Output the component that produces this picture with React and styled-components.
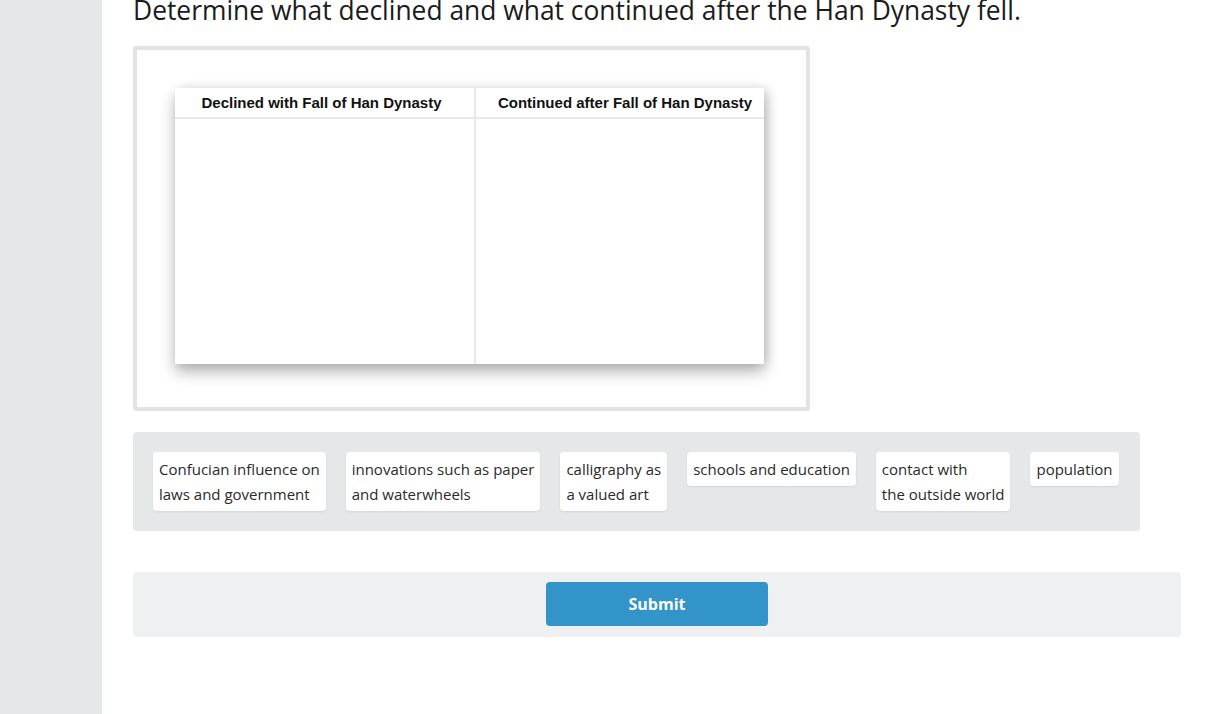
import React from 'react';
import styled, { createGlobalStyle } from 'styled-components';

const GlobalStyle = createGlobalStyle`
  html, body {
    margin: 0;
    padding: 0;
    background: #ffffff;
    overflow: hidden;
  }
  body {
    font-family: "Open Sans", "Liberation Sans", sans-serif;
    color: #222;
  }
`;

const Page = styled.div`
  display: flex;
  height: 714px;
  width: 1210px;
`;

const Sidebar = styled.div`
  width: 102px;
  flex-shrink: 0;
  background: #e5e8e8;
`;

const Main = styled.div`
  flex: 1;
  padding-left: 31px;
  display: flex;
  flex-direction: column;
  align-items: flex-start;
`;

const Title = styled.h1`
  margin: -5px 0 21px;
  font-size: 26.4px;
  line-height: 30px;
  font-weight: 400;
  color: #1b1b1b;
  white-space: nowrap;
`;

const Frame = styled.div`
  box-sizing: border-box;
  width: 677px;
  height: 365px;
  border: 4px solid #e3e3e3;
  border-radius: 3px;
  padding: 38px;
  background: #fff;
`;

const Table = styled.div`
  width: 589px;
  height: 276px;
  display: grid;
  grid-template-columns: 301px 1fr;
  grid-template-rows: 31px 1fr;
  background: #fff;
  box-shadow: 0 8px 14px rgba(0, 0, 0, 0.28), 4px 0 10px rgba(0, 0, 0, 0.12);
`;

const HeadCell = styled.div`
  display: flex;
  align-items: center;
  justify-content: center;
  font-family: "Liberation Sans", Arial, sans-serif;
  font-weight: 700;
  font-size: 15px;
  color: #111;
  border-bottom: 2px solid #e8e8e8;
  border-right: ${p => (p.$first ? '2px solid #e8e8e8' : 'none')};
  padding-right: ${p => (p.$first ? '6px' : '0')};
  padding-left: ${p => (p.$first ? '0' : '10px')};
`;

const DropCell = styled.div`
  border-right: ${p => (p.$first ? '2px solid #e8e8e8' : 'none')};
`;

const Bank = styled.div`
  box-sizing: border-box;
  width: 1007px;
  margin-top: 21px;
  padding: 20px;
  background: #e6e7e8;
  border-radius: 4px;
  display: flex;
  flex-wrap: wrap;
  align-items: flex-start;
  gap: 20px;
`;

const Token = styled.div`
  background: #fff;
  border-radius: 4px;
  padding: 5px 6px 4px;
  font-size: 15px;
  line-height: 25px;
  color: #2a2a2a;
  white-space: nowrap;
  box-shadow: 0 1px 2px rgba(0, 0, 0, 0.08);
`;

const SubmitBar = styled.div`
  box-sizing: border-box;
  width: 1048px;
  margin-top: 41px;
  padding: 10px 0 11px;
  background: #eff0f2;
  border-radius: 4px;
  display: flex;
  justify-content: center;
`;

const SubmitButton = styled.button`
  width: 222px;
  height: 44px;
  border: none;
  border-radius: 4px;
  background: #3294c9;
  color: #fff;
  font-family: "Open Sans", "Liberation Sans", sans-serif;
  font-weight: 700;
  font-size: 16px;
  cursor: pointer;
`;

const tokens = [
  ['Confucian influence on', 'laws and government'],
  ['innovations such as paper', 'and waterwheels'],
  ['calligraphy as', 'a valued art'],
  ['schools and education'],
  ['contact with', 'the outside world'],
  ['population'],
];

export default function App() {
  return (
    <>
      <GlobalStyle />
      <Page>
        <Sidebar />
        <Main>
          <Title>Determine what declined and what continued after the Han Dynasty fell.</Title>
          <Frame>
            <Table>
              <HeadCell $first>Declined with Fall of Han Dynasty</HeadCell>
              <HeadCell>Continued after Fall of Han Dynasty</HeadCell>
              <DropCell $first />
              <DropCell />
            </Table>
          </Frame>
          <Bank>
            {tokens.map((lines, i) => (
              <Token key={i}>
                {lines.map((l, j) => (
                  <React.Fragment key={j}>
                    {j > 0 && <br />}
                    {l}
                  </React.Fragment>
                ))}
              </Token>
            ))}
          </Bank>
          <SubmitBar>
            <SubmitButton>Submit</SubmitButton>
          </SubmitBar>
        </Main>
      </Page>
    </>
  );
}
